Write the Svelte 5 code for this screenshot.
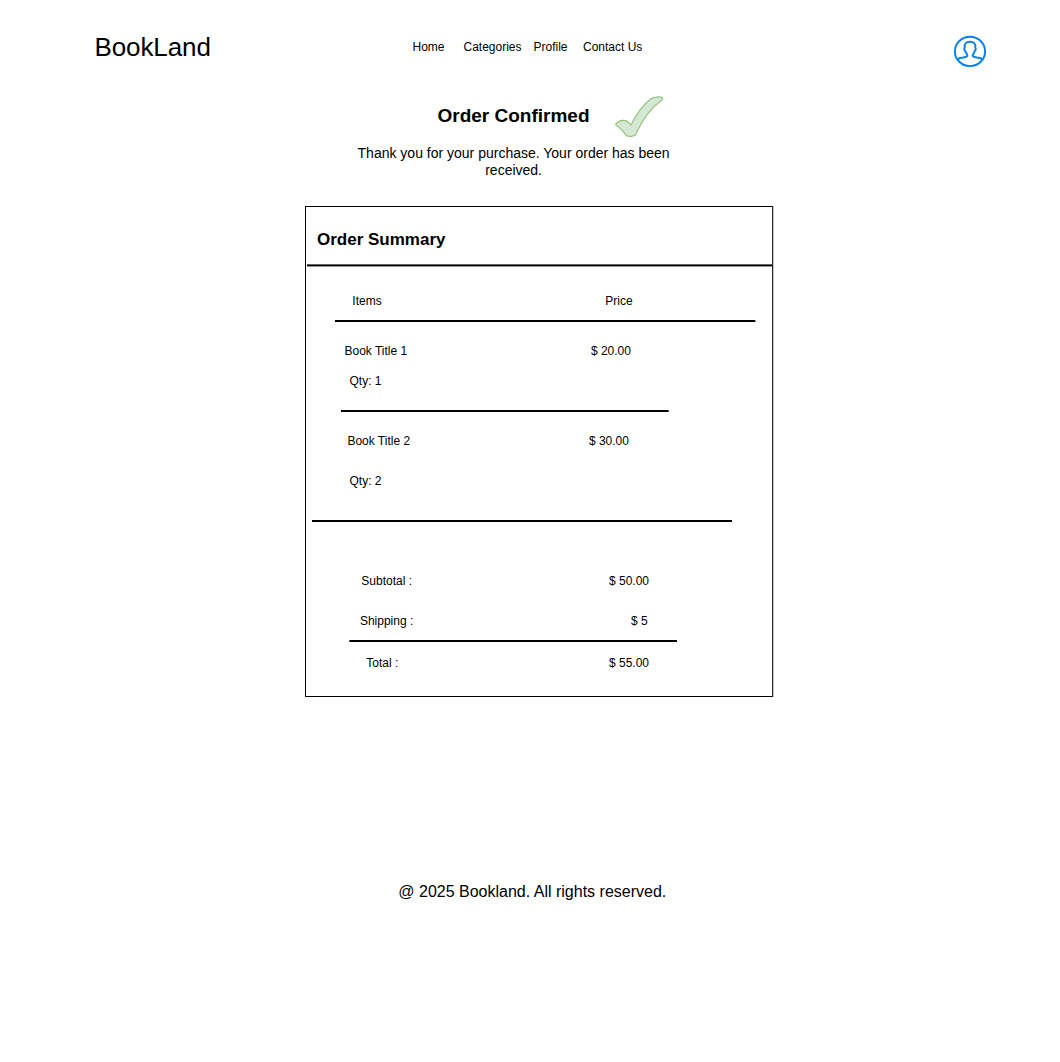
<script>
  const links = [
    { label: 'Home', slot: 'home' },
    { label: 'Categories', slot: 'categories' },
    { label: 'Profile', slot: 'profile' },
    { label: 'Contact Us', slot: 'contact' },
  ];

  const books = [
    { title: 'Book Title 1', price: '$ 20.00', qty: 1, slot: 'first' },
    { title: 'Book Title 2', price: '$ 30.00', qty: 2, slot: 'second' },
  ];

  const totals = [
    { label: 'Subtotal :', amount: '$ 50.00', slot: 'subtotal' },
    { label: 'Shipping :', amount: '$ 5', slot: 'shipping' },
    { label: 'Total :', amount: '$ 55.00', slot: 'total' },
  ];
</script>

<div class="page">
  <header>
    <div class="brand">BookLand</div>
    <nav>
      {#each links as link}
        <span class={link.slot}>{link.label}</span>
      {/each}
    </nav>
    <svg class="user" width="34" height="34" viewBox="0 0 34 34" fill="none" stroke="#0080f0" stroke-width="1.9">
      <ellipse cx="17" cy="16.4" rx="15.1" ry="14.7" />
      <path d="M4.800 24.600C5.600 23.200 7.800 22.700 10.200 22.500C12.600 22.200 14.200 21.900 14.300 20.600C14.300 19.100 12.800 18 12.300 16C11.200 15.200 11.200 13.500 11.700 12.500C11.100 8.700 13.200 6.700 17 6.700S22.900 8.700 22.300 12.500C22.800 13.500 22.800 15.200 21.700 16C21.200 18 19.700 19.100 19.700 20.600C19.800 21.900 21.400 22.200 23.800 22.500C26.200 22.700 28.400 23.200 29.200 24.600" />
    </svg>
  </header>

  <section class="confirmation">
    <div class="heading">
      <h1>Order Confirmed</h1>
      <svg class="tick" width="50" height="42" viewBox="0 0 50 42" fill="#d5e8d4" stroke="#97c17e" stroke-width="1.2" stroke-linejoin="round">
        <path d="M1.900 28C4 25.200 6.300 24.200 9.300 24.300C12.800 24.400 14.800 26 16.900 29C21.800 19.500 29.200 8.500 36.700 3C39.600 .9 45.500 .5 48 1.400C49.300 2.100 48.500 3.800 47 4.800C36.200 12.300 27.800 25 21.900 38C20.700 40.700 14 41 12 39.200C9 35 6 31.600 2.500 29.500C1.700 29.100 1.500 28.600 1.900 28Z" />
      </svg>
    </div>
    <p>Thank you for your purchase. Your order has been received.</p>
  </section>

  <main>
    <h2>Order Summary</h2>
    <div class="row columns"><span>Items</span><span>Price</span></div>
    <div class="rule wide"></div>
    {#each books as book}
      <div class="row {book.slot}"><span>{book.title}</span><span>{book.price}</span></div>
      <div class="qty {book.slot}">Qty: {book.qty}</div>
      <div class="rule after-{book.slot}"></div>
    {/each}
    {#each totals as line}
      {#if line.slot === 'total'}
        <div class="rule sum"></div>
      {/if}
      <div class="row {line.slot}"><span>{line.label}</span><span>{line.amount}</span></div>
    {/each}
  </main>

  <footer>@ 2025 Bookland. All rights reserved.</footer>
</div>

<style>
  :global(body) {
    margin: 0;
    background: #fff;
  }

  .page {
    box-sizing: border-box;
    width: 1060px;
    height: 1062px;
    overflow: hidden;
    color: #000;
    font: 12px/14px 'Liberation Sans', Arial, sans-serif;
    white-space: nowrap;
  }

  header {
    display: grid;
    grid-template-columns: 318px 540.5px 34px;
    align-items: start;
    height: 94px;
    padding-left: 94.5px;
    box-sizing: border-box;
  }

  .brand {
    padding-top: 32px;
    font-size: 26px;
    line-height: 31px;
    letter-spacing: -0.1px;
  }

  nav {
    display: grid;
    grid-template-columns: 51px 70px 49.5px auto;
    padding-top: 40px;
  }

  .user {
    margin-top: 35px;
  }

  .heading {
    display: flex;
    height: 50px;
    padding-left: 437.5px;
  }

  h1 {
    width: 176.5px;
    margin: 10px 0 0;
    font-size: 19px;
    line-height: 23px;
  }

  .tick {
    margin-top: 2px;
  }

  .confirmation p {
    width: 330px;
    margin: 1px 0 0 348.6px;
    font-size: 14px;
    line-height: 17px;
    text-align: center;
    white-space: normal;
  }

  main {
    box-sizing: border-box;
    width: 468px;
    height: 491px;
    margin: 27px 0 0 305px;
    border: 1px solid #000;
    border-right-color: #222;
    box-shadow: 1px 0 0 #ccc;
  }

  h2 {
    box-sizing: border-box;
    height: 60px;
    margin: 0 0 0 1px;
    padding: 23px 0 0 10px;
    border-bottom: 1px solid #999;
    box-shadow: inset 0 -1px 0 #000, inset 0 -2px 0 #666;
    font-size: 17px;
    line-height: 20px;
  }

  .row {
    display: grid;
  }

  .columns {
    grid-template-columns: 253px auto;
    padding: 27px 0 0 46.3px;
  }

  .row.first {
    grid-template-columns: 246.4px auto;
    padding: 22px 0 0 38.5px;
  }

  .row.second {
    grid-template-columns: 241.5px auto;
    padding: 22px 0 0 41.4px;
  }

  .qty {
    padding: 16px 0 0 43.5px;
  }

  .qty.second {
    padding-top: 26px;
  }

  .rule {
    height: 2px;
    background: #000;
  }

  .wide {
    width: 420px;
    margin: 12px 0 0 29px;
    border-right: 1px solid #aaa;
  }

  .after-first {
    width: 327px;
    margin: 22px 0 0 35px;
    border-right: 1px solid #555;
  }

  .after-second {
    width: 420px;
    margin: 32px 0 0 6px;
  }

  .sum {
    width: 327px;
    margin: 12px 0 0 43px;
    border-left: 1px solid #555;
  }

  .subtotal {
    grid-template-columns: 247.7px auto;
    padding: 52px 0 0 55.3px;
  }

  .shipping {
    grid-template-columns: 271px auto;
    padding: 26px 0 0 53.9px;
  }

  .total {
    grid-template-columns: 242.7px auto;
    padding: 14px 0 0 60.3px;
  }

  footer {
    margin: 185px 0 0 398.3px;
    font-size: 16px;
    line-height: 20px;
  }
</style>
